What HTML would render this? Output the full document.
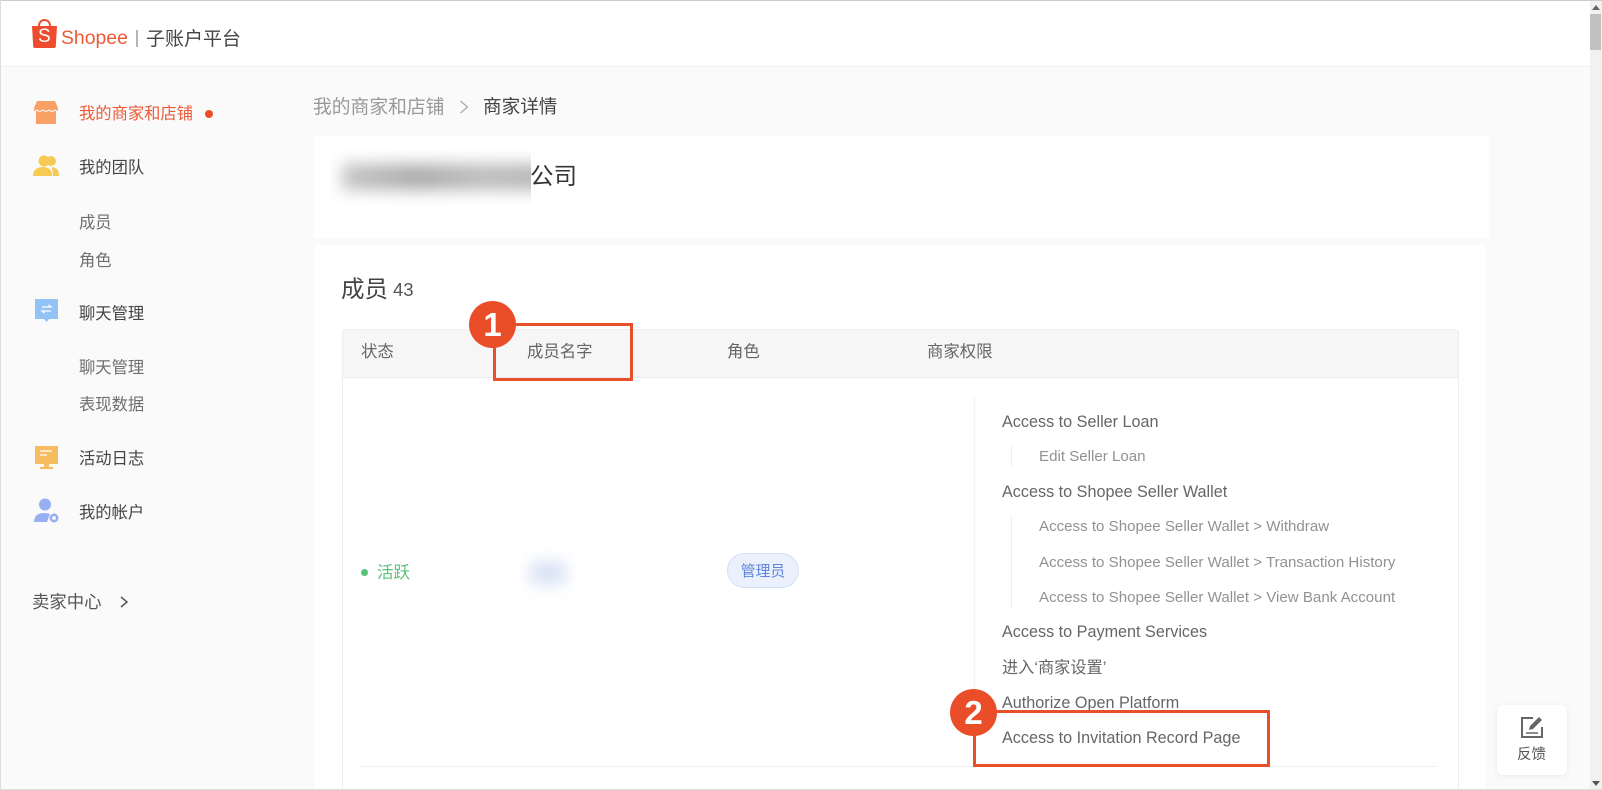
<!DOCTYPE html>
<html lang="zh"><head><meta charset="utf-8"><title>子账户平台</title>
<style>
html,body{margin:0;padding:0;width:1602px;height:790px;overflow:hidden;background:#fafafa}
body{position:relative;font-family:"Liberation Sans","Noto Sans CJK SC",sans-serif;color:#444}
.a{position:absolute;white-space:nowrap}
.t{position:absolute;white-space:nowrap;line-height:24px;height:24px}
.n{font-size:16.300px;color:#444;left:79px}
.s{font-size:16.300px;color:#6f6f6f;left:79px}
.h{font-size:16.400px;color:#666}
.p{font-size:16.200px;color:#666;left:1002px}
.q{font-size:15.100px;color:#929292;left:1039px}
svg{position:absolute;display:block}
.red{position:absolute;box-sizing:border-box;border:3px solid #e84f2b}
.c{position:absolute;width:47px;height:47px;border-radius:50%;background:#ea4e28;color:#fff;font-weight:bold;font-size:33px;line-height:47px;text-align:center}
</style></head><body>
<!-- header -->
<div class="a" style="left:0;top:0;width:1590px;height:67px;background:#fff;border-bottom:1px solid #f0f0f0;box-sizing:border-box"></div>
<svg style="left:31px;top:17px" width="27" height="32" viewBox="0 0 27 32"><path d="M8 9C8 1 19 1 19 9" fill="none" stroke="#ee4d2d" stroke-width="2"/><path d="M1 9H26L24.800 29.500Q24.600 31 23 31H4Q2.400 31 2.200 29.500Z" fill="#ee4d2d"/></svg>
<div class="t" style="left:38px;top:25px;font-size:19px;color:#fff">S</div>
<div class="t" style="left:61px;top:26px;font-size:19.400px;color:#ee5a37">Shopee</div>
<div class="a" style="left:136px;top:30px;width:2px;height:17px;background:#b5b5b5"></div>
<div class="t" style="left:146px;top:28px;font-size:19px;color:#444">子账户平台</div>
<!-- sidebar -->
<svg style="left:33px;top:100px" width="26" height="25" viewBox="0 0 26 25"><path d="M4 1H22L25 8V11L22 9.500 19 11 16 9.500 13 11 10 9.500 7 11 4 9.500 1 11V8Z" fill="#f8a066"/><path d="M3 10.800L7 12 10 10.800 13 12 16 10.800 19 12 23 10.800V24H3Z" fill="#f8a066"/></svg>
<div class="t n" style="top:102px;color:#ee5a37">我的商家和店铺</div>
<div class="a" style="left:205px;top:110px;width:8px;height:8px;border-radius:50%;background:#ea4e28"></div>
<svg style="left:32px;top:155px" width="28" height="22" viewBox="0 0 28 22"><circle cx="19" cy="6" r="5" fill="#f5c95c"/><path d="M20 12Q27 13 27 20V21H21Z" fill="#f5c95c"/><circle cx="12" cy="6" r="5.500" fill="#f7cb52"/><path d="M1 21C1 15 5 12 11 12S20 15 20 21Z" fill="#f7cb52"/></svg>
<div class="t n" style="top:156px">我的团队</div>
<div class="t s" style="top:211px">成员</div>
<div class="t s" style="top:249px">角色</div>
<svg style="left:34px;top:299px" width="25" height="25" viewBox="0 0 25 25"><path d="M1 0H24V20H15L12.500 23 10 20H1Z" fill="#93c3f5"/><path d="M8 8H17L14.500 6M17 12H8L10.500 14" fill="none" stroke="#fff" stroke-width="1.300"/></svg>
<div class="t n" style="top:302px">聊天管理</div>
<div class="t s" style="top:356px">聊天管理</div>
<div class="t s" style="top:393px">表现数据</div>
<svg style="left:34px;top:446px" width="25" height="24" viewBox="0 0 25 24"><path d="M1 0H24V18H15V21H19V23H6V21H10V18H1Z" fill="#f6bc5f"/><path d="M6 5H18M6 9H13" stroke="#fff" stroke-width="1.200"/></svg>
<div class="t n" style="top:447px">活动日志</div>
<svg style="left:33px;top:498px" width="27" height="26" viewBox="0 0 27 26"><circle cx="12" cy="6.500" r="6" fill="#98b0f2"/><path d="M1 24C1 18 5 15 11 15Q15 15 17 16L14 24Z" fill="#98b0f2"/><circle cx="21" cy="20" r="3.200" fill="none" stroke="#98b0f2" stroke-width="2.600"/></svg>
<div class="t n" style="top:501px">我的帐户</div>
<div class="t" style="left:32px;top:590px;font-size:17.400px;color:#555">卖家中心</div>
<svg style="left:118px;top:595px" width="12" height="14" viewBox="0 0 12 14"><path d="M3 2L9 7 3 12" fill="none" stroke="#555" stroke-width="1.500"/></svg>
<!-- breadcrumb -->
<div class="t" style="left:313px;top:95px;font-size:18.800px;color:#999">我的商家和店铺</div>
<svg style="left:458px;top:99px" width="12" height="16" viewBox="0 0 12 16"><path d="M2.500 2L9.500 8 2.500 14" fill="none" stroke="#aaa" stroke-width="1.300"/></svg>
<div class="t" style="left:483px;top:95px;font-size:18.600px;color:#444">商家详情</div>
<!-- card 1 -->
<div class="a" style="left:314px;top:136px;width:1175px;height:102px;background:#fff"></div>
<div class="a" style="left:330px;top:150px;width:201px;height:56px;overflow:hidden">
<div class="a" style="left:12px;top:14px;width:215px;height:26px;background:linear-gradient(90deg,#c4c4c4,#aaa 35%,#bcbcbc 65%,#b4b4b4);filter:blur(8px)"></div>
</div>
<div class="t" style="left:530px;top:164px;font-size:23.500px;color:#333">公司</div>
<!-- card 2 -->
<div class="a" style="left:314px;top:245px;width:1172px;height:545px;background:#fff"></div>
<div class="t" style="left:341px;top:277px;font-size:23.500px;color:#444">成员</div>
<div class="t" style="left:393px;top:278px;font-size:18.500px;color:#555">43</div>
<!-- table -->
<div class="a" style="left:342px;top:329px;width:1117px;height:470px;border:1px solid #eee;border-radius:4px;box-sizing:border-box"></div>
<div class="a" style="left:342px;top:329px;width:1117px;height:49px;background:#f6f6f6;border:1px solid #eee;border-radius:4px 4px 0 0;box-sizing:border-box"></div>
<div class="t h" style="left:361px;top:340px">状态</div>
<div class="t h" style="left:527px;top:340px">成员名字</div>
<div class="t h" style="left:727px;top:340px">角色</div>
<div class="t h" style="left:927px;top:340px">商家权限</div>
<div class="a" style="left:361px;top:569px;width:7px;height:7px;border-radius:50%;background:#55c27a"></div>
<div class="t" style="left:377px;top:561px;font-size:16.500px;color:#5cc27c">活跃</div>
<div class="a" style="left:530px;top:562px;width:36px;height:22px;background:#d6e1f4;filter:blur(8px)"></div>
<div class="a" style="left:727px;top:553px;width:72px;height:35px;box-sizing:border-box;border:1px solid #d2e0f7;border-radius:18px;background:#eaf1fd;font-size:14.800px;line-height:37px;text-align:center;color:#5c85dc">管理员</div>
<!-- permissions -->
<div class="a" style="left:974px;top:396px;width:1px;height:372px;background:#f3f3f3"></div>
<div class="a" style="left:1011px;top:446px;width:1px;height:21px;background:#eee"></div>
<div class="a" style="left:1011px;top:516px;width:1px;height:92px;background:#eee"></div>
<div class="t p" style="top:410px">Access to Seller Loan</div>
<div class="t q" style="top:445px">Edit Seller Loan</div>
<div class="t p" style="top:480px">Access to Shopee Seller Wallet</div>
<div class="t q" style="top:515px">Access to Shopee Seller Wallet &gt; Withdraw</div>
<div class="t q" style="top:551px">Access to Shopee Seller Wallet &gt; Transaction History</div>
<div class="t q" style="top:586px">Access to Shopee Seller Wallet &gt; View Bank Account</div>
<div class="t p" style="top:620px">Access to Payment Services</div>
<div class="t p" style="top:656px">进入‘商家设置’</div>
<div class="t p" style="top:691px">Authorize Open Platform</div>
<div class="t p" style="top:726px">Access to Invitation Record Page</div>
<div class="a" style="left:361px;top:766px;width:1076px;height:1px;background:#f0f0f0"></div>
<!-- annotations -->
<div class="red" style="left:493px;top:323px;width:140px;height:58px"></div>
<div class="c" style="left:469px;top:301px">1</div>
<div class="red" style="left:973px;top:710px;width:297px;height:57px"></div>
<div class="c" style="left:950px;top:689px">2</div>
<!-- feedback -->
<div class="a" style="left:1497px;top:705px;width:70px;height:70px;background:#fff;border-radius:5px;box-shadow:0 1px 6px rgba(0,0,0,.07)"></div>
<svg style="left:1520px;top:716px" width="24" height="23" viewBox="0 0 24 23"><path d="M13 2H2V21H22V11" fill="none" stroke="#666" stroke-width="2"/><path d="M6 17H18" stroke="#666" stroke-width="1.500"/><path d="M9 14L10 10 19 1 22 4 13 13Z" fill="#666"/></svg>
<div class="t" style="left:1517px;top:743px;font-size:14.500px;color:#555">反馈</div>
<!-- scrollbar -->
<div class="a" style="left:1590px;top:0;width:12px;height:790px;background:#f1f1f1"></div>
<div class="a" style="left:1590px;top:14px;width:11px;height:36px;background:#c1c1c1"></div>
<svg style="left:1592px;top:5px" width="8" height="5" viewBox="0 0 8 5"><path d="M4 0L8 5H0Z" fill="#666"/></svg>
<svg style="left:1592px;top:781px" width="8" height="5" viewBox="0 0 8 5"><path d="M0 0H8L4 5Z" fill="#555"/></svg>
<!-- window edges -->
<div class="a" style="left:0;top:0;width:1602px;height:1px;background:#ccc"></div>
<div class="a" style="left:0;top:0;width:1px;height:790px;background:#ddd"></div>
<div class="a" style="left:0;top:789px;width:1602px;height:1px;background:#ddd"></div>
</body></html>
